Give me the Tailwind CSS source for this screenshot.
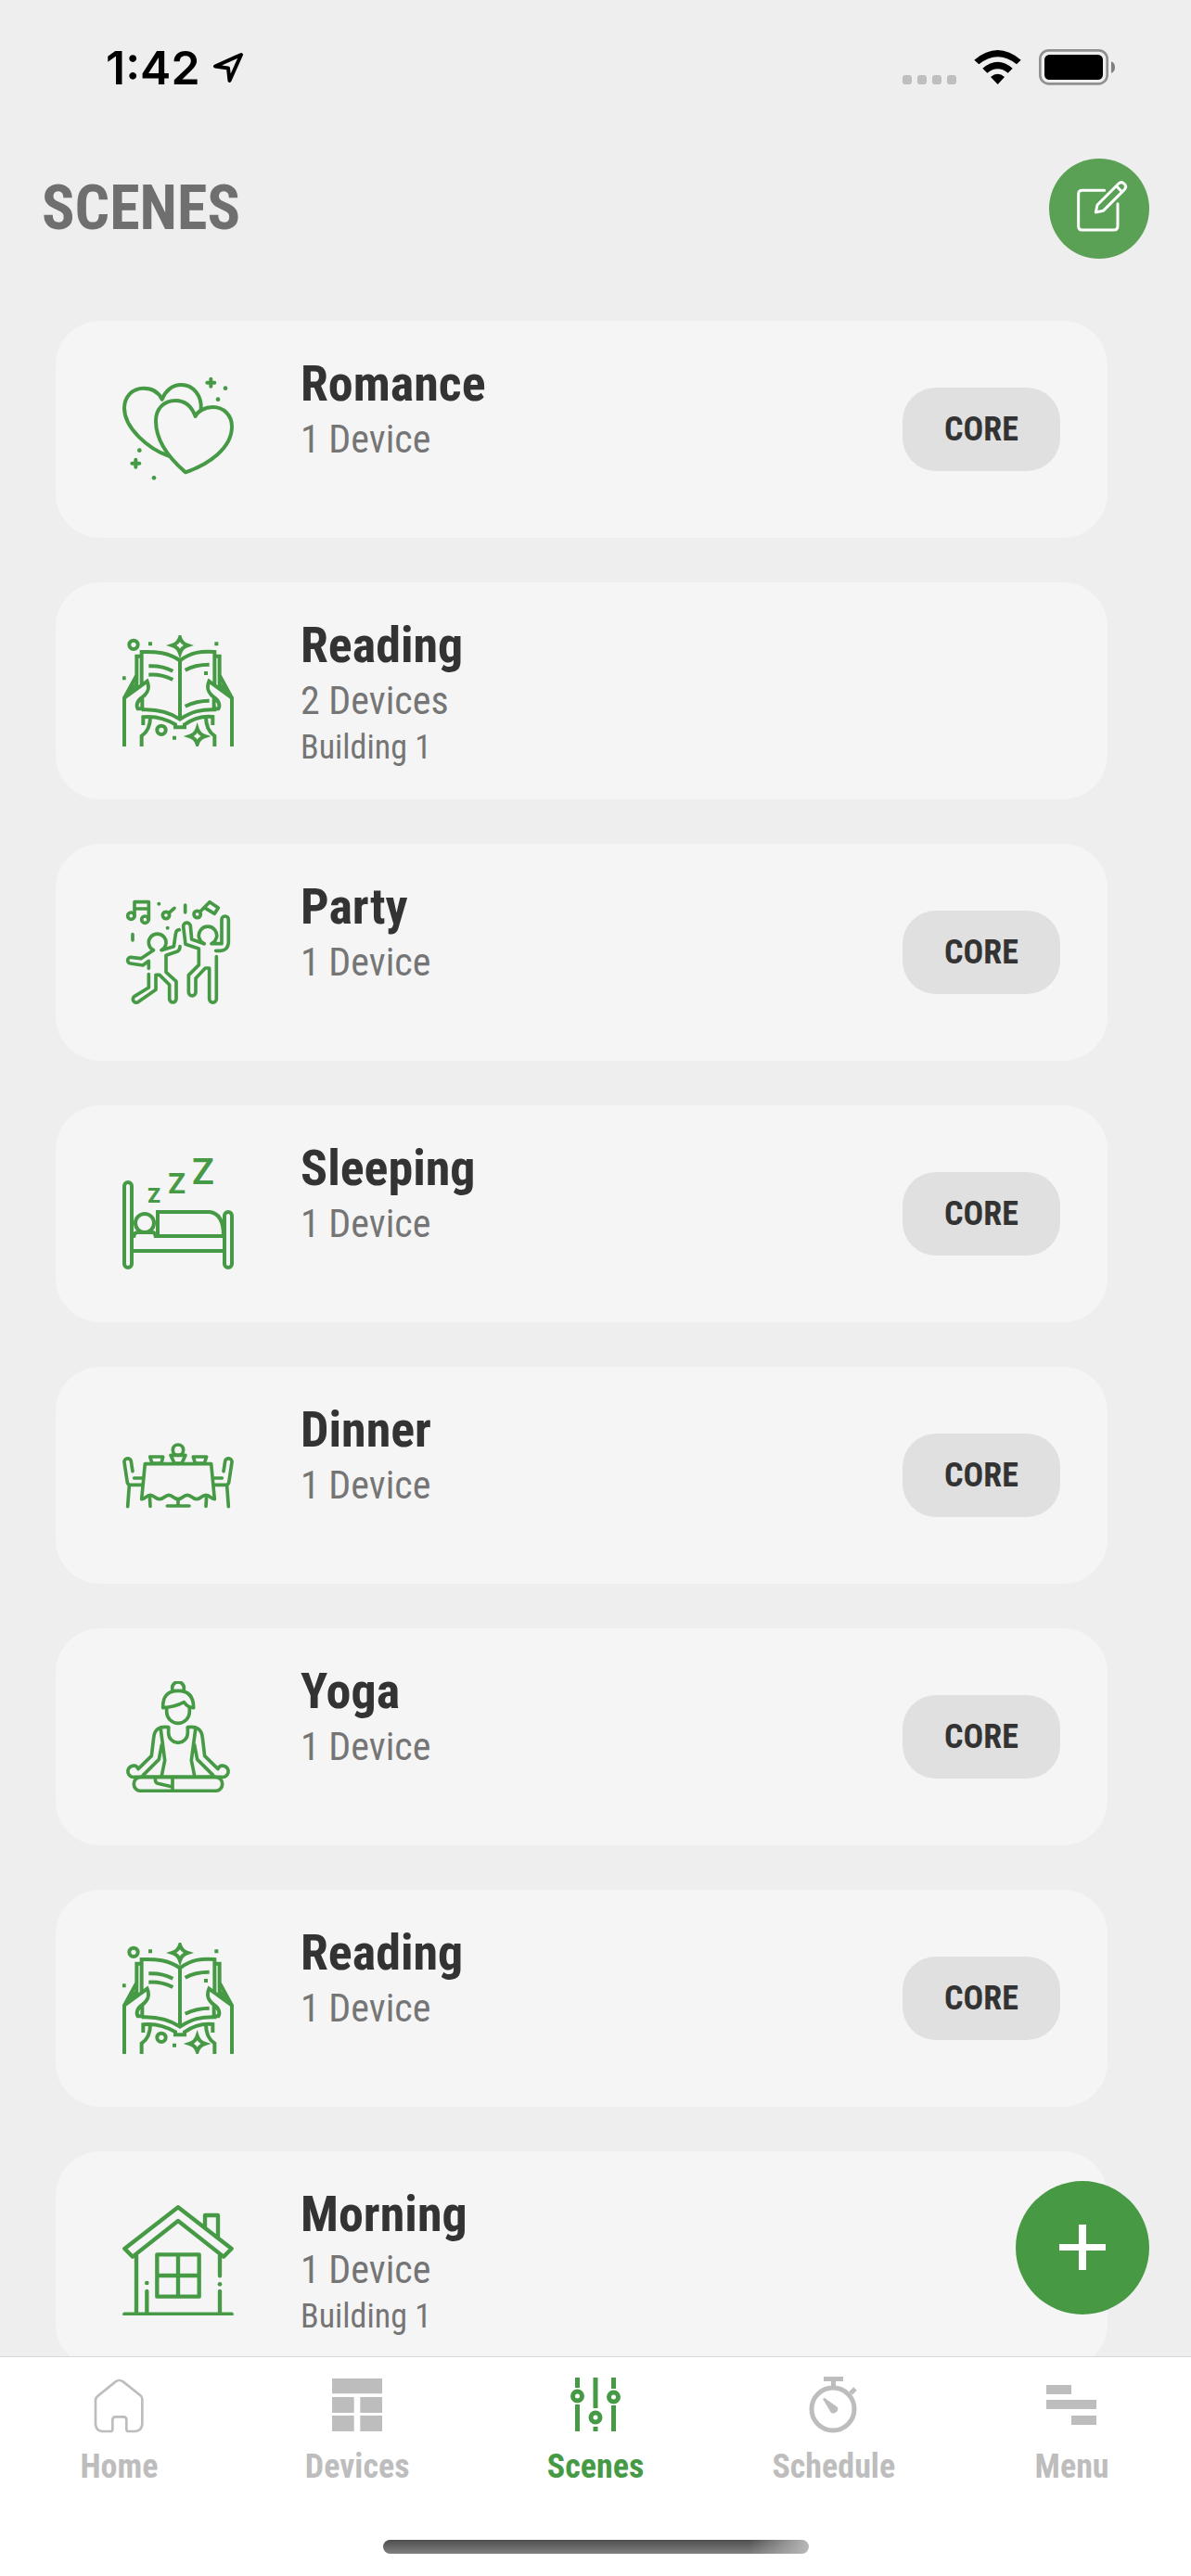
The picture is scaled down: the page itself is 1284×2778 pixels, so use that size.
<!DOCTYPE html>
<html lang="en">
<head>
<meta charset="utf-8">
<meta name="viewport" content="width=device-width, initial-scale=1">
<title>Scenes</title>
<script src="https://cdn.jsdelivr.net/npm/@tailwindcss/browser@4"></script>
</head>
<body class="flex h-screen flex-col overflow-hidden bg-[#eeeeee] font-['Roboto_Condensed',Roboto,sans-serif] text-[#333333]">

<!-- Shared icon definitions -->
<svg class="hidden" aria-hidden="true">
  <symbol id="icon-reading" viewBox="96 75 360 360">
    <g fill="none" stroke="currentColor" stroke-width="12">
      <circle cx="132" cy="106" r="14"/>
      <circle cx="222" cy="382" r="14"/>
      <path d="M282 83Q288 102 307 108Q288 114 282 133Q276 114 257 108Q276 102 282 83Z"/>
      <path d="M338 377Q344 396 363 402Q344 408 338 427Q332 408 313 402Q332 396 338 377Z"/>
      <path d="M282 155V345M158 235V129C205 128 245 130 282 157C319 130 350 126 394 129V235"/>
      <path d="M158 316C200 314 245 322 282 347C319 322 350 314 400 316"/>
      <path d="M163 366V340C205 335 240 348 267 364V373H297V364C320 348 350 335 388 339V366"/>
      <path d="M181 175Q225 173 259 191M181 203Q225 201 259 219M299 188Q330 170 377 170M299 305Q335 287 377 287"/>
      <g id="reading-hand">
        <path d="M154 143H142V240M102 435V278L176 224C186 248 178 262 160 276C142 288 140 304 146 313H160V280M102 278L142 205M120 262L142 232M158 435V401C178 388 186 370 186 340"/>
      </g>
      <use href="#reading-hand" transform="translate(552 0) scale(-1 1)"/>
    </g>
    <path fill="currentColor" d="M180 97h12v12h-12zM394 97h12v12h-12zM360 192h12v12h-12zM96 208h11v12h-11zM258 401h12v12h-12z"/>
  </symbol>
</svg>

<div class="flex shrink-0 items-start justify-between pt-[53px] pr-[81px] pl-[114px]">
  <div class="flex h-10 items-center gap-3 text-black">
    <span class="font-['Inter',sans-serif] text-[50px] leading-10 font-semibold">1:42</span>
    <svg class="size-9" viewBox="0 0 36 36" fill="none" stroke="currentColor" stroke-width="4" stroke-linejoin="round"><path d="M32 4L4 16.500L18 18.500L19.500 32Z"/></svg>
  </div>
  <svg class="h-10 w-[230px]" viewBox="69 69 690 120">
    <g fill="#bebebe"><rect x="69" y="153" width="30" height="30" rx="9"/><rect x="117" y="153" width="30" height="30" rx="9"/><rect x="165" y="153" width="30" height="30" rx="9"/><rect x="213" y="153" width="30" height="30" rx="9"/></g>
    <path d="M377 183L354 159Q377 139 399 159ZM328 131Q377 89 425 131L410 146Q377 120 343 146ZM301 104Q377 40 452 104L438 118Q377 70 316 118Z"/>
    <rect x="514" y="73" width="217" height="108" rx="28" fill="none" stroke="#909090" stroke-width="8"/>
    <rect x="528" y="87" width="189" height="81" rx="16"/>
    <path d="M744 109Q756 113 756 128Q756 142 744 146Z" fill="#808080"/>
  </svg>
</div>

<header class="flex shrink-0 items-center justify-between px-[45px] pt-[78px] pb-[67px]">
  <h1 class="text-[66px] leading-[80px] font-bold text-[#6f6f6f]">SCENES</h1>
  <button type="button" aria-label="Edit scenes" class="size-[108px] rounded-full bg-[#5aa156] text-white">
    <svg class="size-full" viewBox="543 422 324 324" fill="none" stroke="currentColor" stroke-width="9" stroke-linecap="round" stroke-linejoin="round"><path d="M722 525H650Q638 525 638 537V641Q638 653 650 653H752Q765 653 765 641V568M694 596L699 572L768 503Q777 495 785 503L787 505Q795 513 787 522L718 591ZM761 511L779 530"/></svg>
  </button>
</header>

<div class="relative min-h-0 flex-1">
  <main class="h-full overflow-y-auto [scrollbar-width:none]">
    <ul class="flex flex-col gap-12 pr-[90px] pb-12 pl-[60px]">

      <li class="flex h-[234px] items-center rounded-[48px] bg-[#f5f5f5] pr-[51px] pl-[72px]">
        <svg class="size-[120px] shrink-0 text-[#479a45]" viewBox="96 69 360 360" fill="none" stroke="currentColor" stroke-width="12" stroke-linejoin="round">
          <path d="M332 207C320 175 298 156 268 156C228 156 204 184 204 222C204 290 250 345 300 388C375 362 450 310 450 240C450 204 424 177 388 177C362 177 340 190 332 207Z"/>
          <path d="M350 186C354 140 325 105 286 105C256 105 234 126 224 152C213 128 190 116 164 116C128 116 102 144 102 180C102 245 180 312 245 335" stroke-linecap="round"/>
          <path d="M382 86V110M370 98H394M139 347V371M127 359H151" stroke-linecap="round"/>
          <g fill="currentColor" stroke="none"><circle cx="429" cy="116" r="7"/><circle cx="405" cy="152" r="7"/><circle cx="151" cy="317" r="7"/><circle cx="198" cy="406" r="7"/></g>
        </svg>
        <div class="flex-1 self-start pt-9 pl-[72px]">
          <h2 class="text-[54px] leading-[64px] font-bold">Romance</h2>
          <p class="text-[42px] leading-[56px] text-[#757575]">1 Device</p>
        </div>
        <button type="button" class="h-[90px] w-[170px] rounded-[36px] bg-[#e0e0e0] text-[36px] leading-[48px] font-bold">CORE</button>
      </li>

      <li class="flex h-[234px] items-center rounded-[48px] bg-[#f5f5f5] pr-[51px] pl-[72px]">
        <svg class="size-[120px] shrink-0 text-[#479a45]"><use href="#icon-reading"/></svg>
        <div class="flex-1 self-start pt-9 pl-[72px]">
          <h2 class="text-[54px] leading-[64px] font-bold">Reading</h2>
          <p class="text-[42px] leading-[56px] text-[#757575]">2 Devices</p>
          <p class="text-[36px] leading-[44px] text-[#757575]">Building 1</p>
        </div>
      </li>

      <li class="flex h-[234px] items-center rounded-[48px] bg-[#f5f5f5] pr-[51px] pl-[72px]">
        <svg class="size-[120px] shrink-0 text-[#479a45]" viewBox="66 81 360 360" fill="none" stroke="currentColor" stroke-width="11" stroke-linecap="round" stroke-linejoin="round">
          <circle cx="94" cy="143" r="11"/><circle cx="139" cy="155" r="11"/><path d="M105 143V98H151V155M105 120H151"/>
          <circle cx="207" cy="141" r="11"/><path d="M216 134L234 118M269 108V132M99 203V222"/>
          <circle cx="308" cy="138" r="11"/><path d="M317 130L348 98L376 117L364 136L334 118"/>
          <path d="M166 254A28 28 0 1 1 192 254L232 242L238 202Q240 188 250 188"/>
          <path d="M166 254L126 281L94 277A10 10 0 0 0 92 297L132 303L151 289V313"/>
          <path d="M252 242Q252 254 244 258L207 271V325L240 355V412A11 11 0 0 1 218 412V366L186 334H174V382L118 421A11 11 0 0 1 104 404L151 375V332"/>
          <path d="M330 233A29 29 0 1 1 354 233H387V155A11 11 0 0 1 409 155V230Q407 255 383 256H368"/>
          <path d="M330 233L290 219L286 176A11 11 0 0 0 263 178L270 235L313 249V302L280 335V390A11 11 0 0 0 303 390V345L334 312H347V412A11 11 0 0 0 370 412V275"/>
          <g fill="currentColor" stroke="none"><circle cx="184" cy="104" r="6"/><circle cx="212" cy="182" r="6"/></g>
        </svg>
        <div class="flex-1 self-start pt-9 pl-[72px]">
          <h2 class="text-[54px] leading-[64px] font-bold">Party</h2>
          <p class="text-[42px] leading-[56px] text-[#757575]">1 Device</p>
        </div>
        <button type="button" class="h-[90px] w-[170px] rounded-[36px] bg-[#e0e0e0] text-[36px] leading-[48px] font-bold">CORE</button>
      </li>

      <li class="flex h-[234px] items-center rounded-[48px] bg-[#f5f5f5] pr-[51px] pl-[72px]">
        <svg class="size-[120px] shrink-0 overflow-visible text-[#479a45]" viewBox="66 87 360 360" fill="none" stroke="currentColor" stroke-width="12">
          <rect x="72" y="165" width="24" height="276" rx="12"/><rect x="396" y="261" width="24" height="180" rx="12"/>
          <circle cx="138" cy="297" r="30"/>
          <path d="M102 344Q104 327 115 327H163Q171 327 173 339H396M180 339V261H348Q392 266 393 336M102 387H393"/>
          <g fill="currentColor" stroke="none" class="font-['Roboto',sans-serif]"><text x="148" y="231" font-size="67" font-weight="900">Z</text><text x="214" y="201" font-size="93" font-weight="700">Z</text><text x="291" y="171" font-size="118" font-weight="600">Z</text></g>
        </svg>
        <div class="flex-1 self-start pt-9 pl-[72px]">
          <h2 class="text-[54px] leading-[64px] font-bold">Sleeping</h2>
          <p class="text-[42px] leading-[56px] text-[#757575]">1 Device</p>
        </div>
        <button type="button" class="h-[90px] w-[170px] rounded-[36px] bg-[#e0e0e0] text-[36px] leading-[48px] font-bold">CORE</button>
      </li>

      <li class="flex h-[234px] items-center rounded-[48px] bg-[#f5f5f5] pr-[51px] pl-[72px]">
        <svg class="size-[120px] shrink-0 text-[#479a45]" viewBox="66 33 360 360" fill="none" stroke="currentColor" stroke-width="11" stroke-linecap="round" stroke-linejoin="round">
          <path d="M139 176L128 290C140 290 143 277 156 277S172 290 186 290S203 277 216 277S232 290 246 290S262 277 276 277S292 290 306 290S322 277 336 277S352 290 364 290L353 176Z"/>
          <path d="M154 281L156 313M338 281L336 313M246 290V311M211 312H282"/>
          <path d="M155 153H197L192 174H162ZM295 153H338L331 174H301ZM222 148L234 174H258L270 148Z"/>
          <circle cx="246" cy="131" r="17"/>
          <g id="dinner-chair"><path d="M99 200L94 168A11 11 0 0 0 72 171L82 237Q84 244 92 244H130M104 222H132M88 246L83 314"/></g>
          <use href="#dinner-chair" transform="translate(492 0) scale(-1 1)"/>
        </svg>
        <div class="flex-1 self-start pt-9 pl-[72px]">
          <h2 class="text-[54px] leading-[64px] font-bold">Dinner</h2>
          <p class="text-[42px] leading-[56px] text-[#757575]">1 Device</p>
        </div>
        <button type="button" class="h-[90px] w-[170px] rounded-[36px] bg-[#e0e0e0] text-[36px] leading-[48px] font-bold">CORE</button>
      </li>

      <li class="flex h-[234px] items-center rounded-[48px] bg-[#f5f5f5] pr-[51px] pl-[72px]">
        <svg class="size-[120px] shrink-0 text-[#479a45]" viewBox="66 69 360 360" fill="none" stroke="currentColor" stroke-width="11" stroke-linecap="round" stroke-linejoin="round">
          <path d="M228 97A19 19 0 1 1 264 97"/>
          <path d="M197 155Q195 100 246 100Q296 100 296 155Q278 155 265 137Q235 153 197 155Z"/>
          <path d="M209 158V168A37 37 0 0 0 283 168V156M215 220V237A31 31 0 0 0 277 237V220"/>
          <g id="yoga-arm"><path d="M215 218Q170 212 167 252L160 311L117 353Q112 340 98 343A17 17 0 0 0 106 379H246M190 226L203 325L193 375M193 275L184 322L133 373"/></g>
          <use href="#yoga-arm" transform="translate(492 0) scale(-1 1)"/>
          <rect x="103" y="379" width="286" height="45" rx="22"/>
          <path d="M172 384Q172 398 180 400L228 411M228 384V422"/>
        </svg>
        <div class="flex-1 self-start pt-9 pl-[72px]">
          <h2 class="text-[54px] leading-[64px] font-bold">Yoga</h2>
          <p class="text-[42px] leading-[56px] text-[#757575]">1 Device</p>
        </div>
        <button type="button" class="h-[90px] w-[170px] rounded-[36px] bg-[#e0e0e0] text-[36px] leading-[48px] font-bold">CORE</button>
      </li>

      <li class="flex h-[234px] items-center rounded-[48px] bg-[#f5f5f5] pr-[51px] pl-[72px]">
        <svg class="size-[120px] shrink-0 text-[#479a45]"><use href="#icon-reading"/></svg>
        <div class="flex-1 self-start pt-9 pl-[72px]">
          <h2 class="text-[54px] leading-[64px] font-bold">Reading</h2>
          <p class="text-[42px] leading-[56px] text-[#757575]">1 Device</p>
        </div>
        <button type="button" class="h-[90px] w-[170px] rounded-[36px] bg-[#e0e0e0] text-[36px] leading-[48px] font-bold">CORE</button>
      </li>

      <li class="flex h-[234px] items-center rounded-[48px] bg-[#f5f5f5] pr-[51px] pl-[72px]">
        <svg class="size-[120px] shrink-0 text-[#479a45]" viewBox="66 81 360 360" fill="none" stroke="currentColor" stroke-width="13" stroke-linecap="round" stroke-linejoin="round">
          <path d="M246 91L73 225L99 251L246 135L393 251L419 225ZM333 155V117H375V188"/>
          <path d="M111 247V432M381 247V313M145 363V432M381 363V432M73 437H419M178 244H314V380H178ZM246 244V380M178 312H314"/>
          <g fill="currentColor" stroke="none"><circle cx="145" cy="336" r="7"/><circle cx="381" cy="340" r="7"/></g>
        </svg>
        <div class="flex-1 self-start pt-9 pl-[72px]">
          <h2 class="text-[54px] leading-[64px] font-bold">Morning</h2>
          <p class="text-[42px] leading-[56px] text-[#757575]">1 Device</p>
          <p class="text-[36px] leading-[44px] text-[#757575]">Building 1</p>
        </div>
      </li>
    </ul>
  </main>

  <button type="button" aria-label="Add scene" class="absolute right-[45px] bottom-[45px] flex size-36 items-center justify-center rounded-full bg-[#479944] text-white">
    <svg class="size-[50px]" viewBox="0 0 50 50" fill="currentColor"><path d="M21 0h8v21h21v7H29v21h-8V28H0v-7h21z"/></svg>
  </button>
</div>

<footer class="shrink-0 border-t border-[#d8d8d8] bg-white pb-6">
  <nav class="grid grid-cols-5 pt-[22px] text-center text-[36px] leading-[48px] font-bold text-[#bdbdbd]">
    <a href="#home" class="flex flex-col items-center gap-3">
      <svg class="size-[60px]" viewBox="296 87 180 180" fill="none" stroke="currentColor" stroke-width="8"><path d="M311 160Q311 153 317 148L375 101Q388 91 401 101L456 145Q462 150 462 156V238Q460 258 440 261H418Q411 261 411 254V224Q411 214 401 214H376Q366 214 366 224V254Q366 261 359 261H331Q313 258 311 238Z"/></svg>
      Home
    </a>
    <a href="#devices" class="flex flex-col items-center gap-3">
      <svg class="size-[60px]" viewBox="1065 87 180 180" fill="currentColor"><path d="M1074 90h162v49h-162zM1074 150h71v51h-71zM1165 150h71v51h-71zM1074 210h71v51h-71zM1165 210h71v51h-71z"/></svg>
      Devices
    </a>
    <a href="#scenes" aria-current="page" class="flex flex-col items-center gap-3 text-[#479a45]">
      <svg class="size-[60px]" viewBox="0 0 60 60" fill="none" stroke="currentColor" stroke-width="5"><path d="M10.500 0V11M10.500 29V58M30 0V33M30 53V58M49.500 0V12M49.500 30V58"/><circle cx="10.500" cy="20" r="5"/><circle cx="30" cy="43" r="5"/><circle cx="49.500" cy="21" r="5"/></svg>
      Scenes
    </a>
    <a href="#schedule" class="flex flex-col items-center gap-3">
      <svg class="size-[60px] overflow-visible" viewBox="0 0 60 60" fill="none" stroke="currentColor" stroke-width="5"><circle cx="29" cy="34" r="23"/><path d="M19 1.500H40M29.500 2V11M48 17L53 12"/><path d="M18 23L20 22L34 32A5 5 0 0 1 27 38Z" fill="currentColor" stroke="none"/></svg>
      Schedule
    </a>
    <a href="#menu" class="flex flex-col items-center gap-3">
      <svg class="size-[60px]" viewBox="0 0 60 60" fill="currentColor"><path d="M2 8h27v10H2zM2 24h54v10H2zM29 41h27v10H29z"/></svg>
      Menu
    </a>
  </nav>
  <div class="mx-auto mt-[55px] h-[15px] w-[459px] rounded-full bg-[linear-gradient(to_right,transparent_86%,#b8b8b8),linear-gradient(to_bottom,#4e4e4e,#808080)]"></div>
</footer>
</body>
</html>
